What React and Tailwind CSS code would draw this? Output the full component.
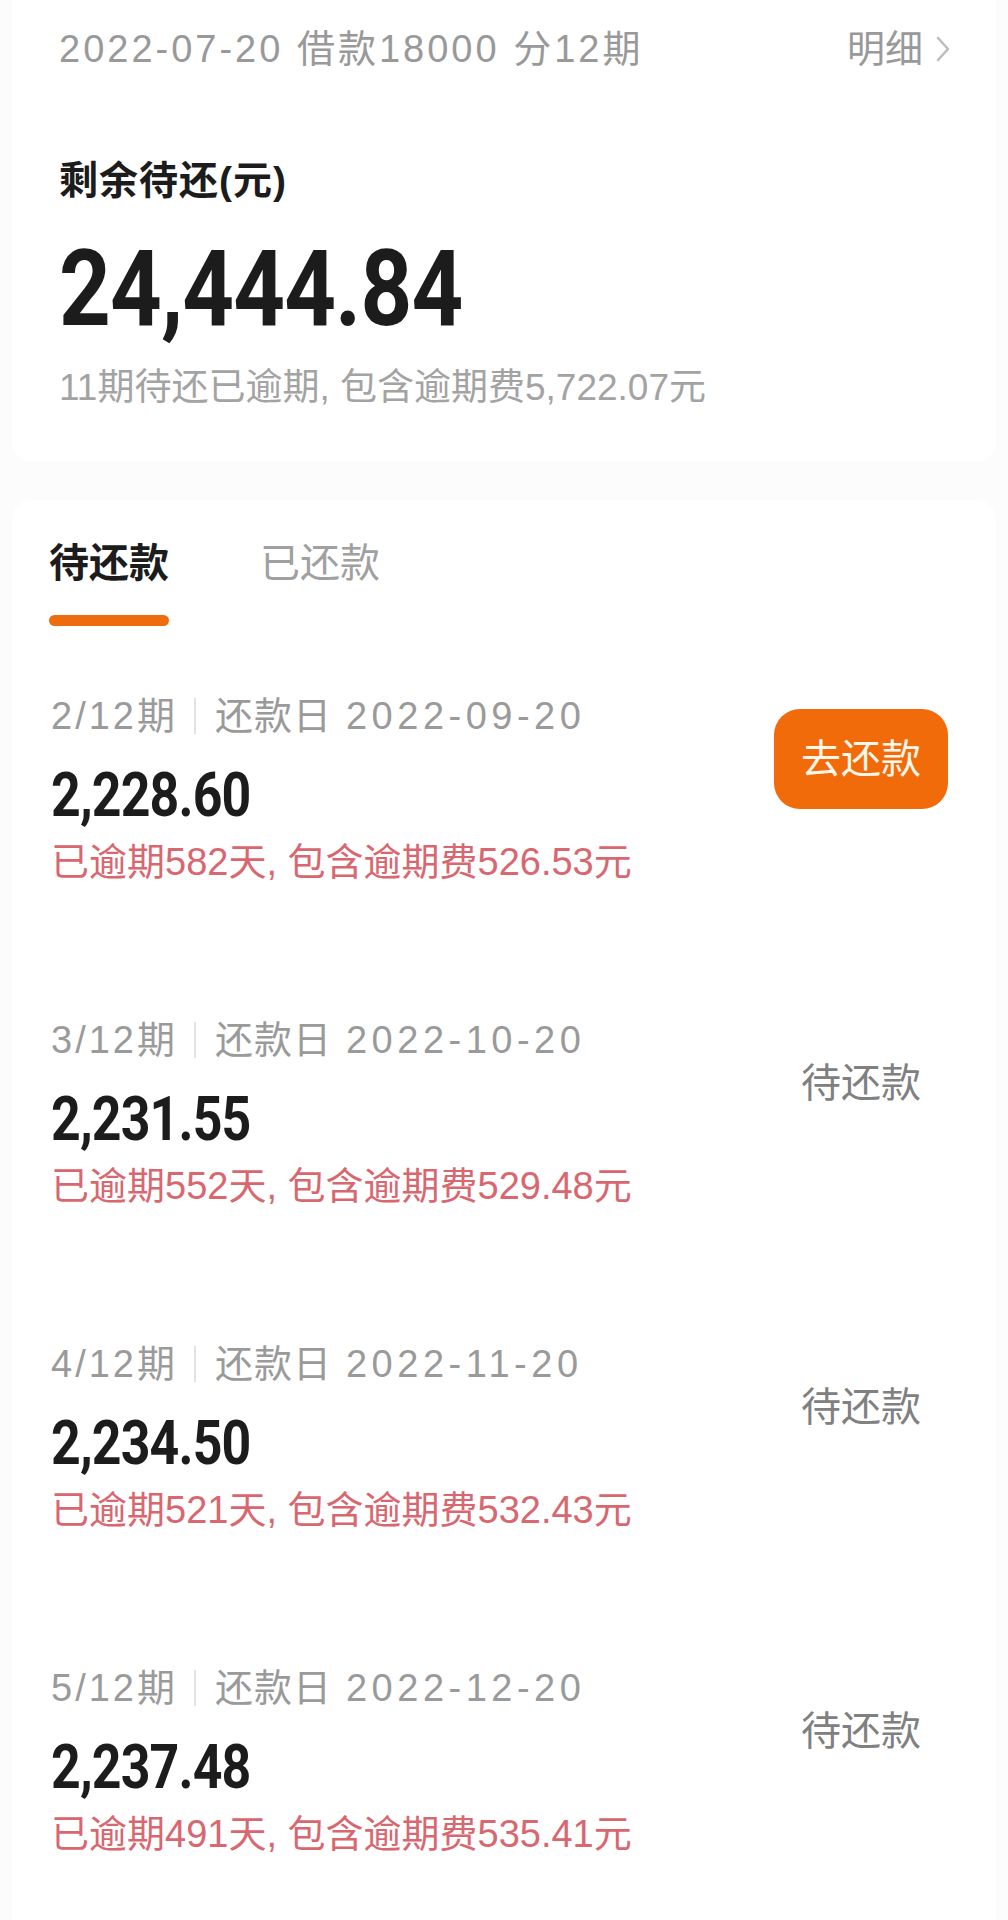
import React from "react";

const items = [
  { no: "2/12期", date: "2022-09-20", amount: "2,228.60", note: "已逾期582天, 包含逾期费526.53元", pay: true },
  { no: "3/12期", date: "2022-10-20", amount: "2,231.55", note: "已逾期552天, 包含逾期费529.48元" },
  { no: "4/12期", date: "2022-11-20", amount: "2,234.50", note: "已逾期521天, 包含逾期费532.43元" },
  { no: "5/12期", date: "2022-12-20", amount: "2,237.48", note: "已逾期491天, 包含逾期费535.41元" },
];

function Chevron() {
  return (
    <svg width="14" height="26" viewBox="0 0 14 26" fill="none">
      <polyline points="2,2 12,13 2,24" stroke="#bdbdbd" strokeWidth="2.6" strokeLinecap="round" strokeLinejoin="round" />
    </svg>
  );
}

export default function App() {
  return (
    <div className="min-h-[1920px] w-[1008px] overflow-hidden bg-[#fcfcfc] font-['Liberation_Sans','Noto_Sans_CJK_SC',sans-serif]">
      {/* summary card */}
      <div className="mx-[12px] h-[462px] rounded-b-[20px] bg-white pl-[47px] pr-[46px] pt-[24px]">
        <div className="flex h-[50px] items-center justify-between text-[38px] text-[#999999]">
          <span className="leading-[50px] tracking-[3px]">2022-07-20 借款18000 分12期</span>
          <span className="flex items-center gap-[13px] leading-[50px]">
            明细
            <Chevron />
          </span>
        </div>
        <div className="mt-[82px] text-[39px] font-bold leading-[50px] tracking-[1px] text-[#1c1c1c]">剩余待还(元)</div>
        <div className="mt-[30px] text-[105px] font-bold leading-none">
          <span className="inline-block origin-left scale-x-[0.86] font-['Roboto',sans-serif] tracking-[-1px] text-[#1c1c1c]">
            24,444.84
          </span>
        </div>
        <div className="mt-[21px] text-[37px] leading-[50px] text-[#a3a3a3]">11期待还已逾期, 包含逾期费5,722.07元</div>
      </div>

      {/* list card */}
      <div className="mx-[12px] mt-[38px] rounded-t-[20px] bg-white pt-[38px]">
        <div className="flex gap-[91px] pl-[37px]">
          <div className="flex flex-col items-start">
            <span className="text-[40px] font-bold leading-[50px] text-[#1c1c1c]">待还款</span>
            <span className="mt-[27px] h-[11px] w-[120px] rounded-full bg-[#ef6c0e]" />
          </div>
          <span className="text-[40px] leading-[50px] text-[#a0a0a0]">已还款</span>
        </div>

        <div className="pt-[65px]">
          {items.map((it) => (
            <div key={it.no} className="h-[324px] pl-[39px] pr-[48px]">
              <div className="flex items-center justify-between">
                <div className="flex flex-col">
                  <div className="flex h-[50px] items-center text-[38px] leading-[50px] text-[#9a9a9a]">
                    <span className="tracking-[3px]">{it.no}</span>
                    <span className="ml-[16px] mr-[19px] h-[36px] w-[2px] bg-[#e3e3e3]" />
                    <span className="tracking-[1px]">还款日</span>
                    <span className="ml-[14px] tracking-[4.5px]">{it.date}</span>
                  </div>
                  <div className="mt-[24px] text-[61px] font-bold leading-none">
                    <span className="inline-block origin-left scale-x-[0.85] font-['Roboto',sans-serif] tracking-[-1px] text-[#1c1c1c]">
                      {it.amount}
                    </span>
                  </div>
                </div>
                <div className="flex w-[174px] justify-center">
                  {it.pay ? (
                    <span className="flex h-[100px] w-[174px] items-center justify-center rounded-[26px] bg-[#f26b0b] text-[40px] leading-none text-[#fff7ea]">
                      去还款
                    </span>
                  ) : (
                    <span className="text-[40px] leading-[50px] text-[#808080]">待还款</span>
                  )}
                </div>
              </div>
              <div className="mt-[11px] text-[38px] leading-[50px] text-[#d8676f]">{it.note}</div>
            </div>
          ))}
        </div>
      </div>
    </div>
  );
}
